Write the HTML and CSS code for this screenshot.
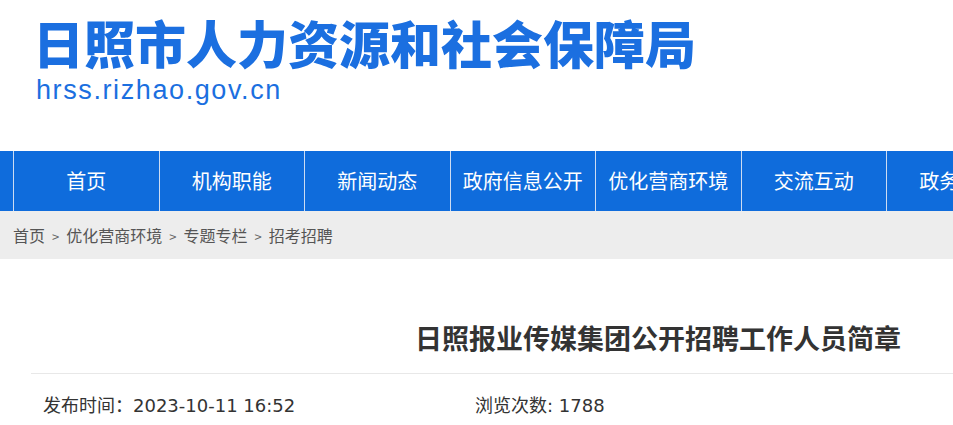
FILE: index.html
```html
<!DOCTYPE html>
<html lang="zh-CN">
<head>
  <meta charset="UTF-8">
  <meta name="viewport" content="width=device-width, initial-scale=1.0">
  <title>日照报业传媒集团公开招聘工作人员简章 | 日照市人力资源和社会保障局</title>
  <link rel="stylesheet" href="styles.css">
</head>
<body>
  <div class="page">
    <header class="site-head">
      <div class="site-name">日照市人力资源和社会保障局</div>
      <div class="site-url">hrss.rizhao.gov.cn</div>
    </header>

    <nav class="main-nav">
      <a href="#">首页</a>
      <a href="#">机构职能</a>
      <a href="#">新闻动态</a>
      <a href="#">政府信息公开</a>
      <a href="#">优化营商环境</a>
      <a href="#">交流互动</a>
      <a href="#">政务服务</a>
    </nav>

    <div class="crumbs">
      <a href="#">首页</a><span class="sep">&gt;</span><a href="#">优化营商环境</a><span class="sep">&gt;</span><a href="#">专题专栏</a><span class="sep">&gt;</span><a href="#">招考招聘</a>
    </div>

    <div class="article">
      <h1 class="article-title">日照报业传媒集团公开招聘工作人员简章</h1>
      <div class="article-meta">
        <span class="meta-date">发布时间：2023-10-11 16:52</span>
        <span class="meta-views">浏览次数: 1788</span>
      </div>
    </div>
  </div>
</body>
</html>
```

FILE: styles.css
```css
html, body {
  margin: 0;
  padding: 0;
  overflow: hidden;
}
body {
  font-family: "Noto Sans", "Noto Sans CJK SC", sans-serif;
  background: #fff;
  color: #333;
}
a {
  text-decoration: none;
  color: inherit;
}
.site-head {
  height: 151px;
  padding-left: 33px;
  box-sizing: border-box;
}
.site-name {
  height: 56px;
  padding-top: 14px;
  font-family: "Noto Sans CJK SC", sans-serif;
  font-size: 51px;
  font-weight: 900;
  line-height: 56px;
  color: #1b6fe0;
  white-space: nowrap;
}
.site-url {
  margin-top: 4px;
  padding-left: 3px;
  font-family: "Liberation Sans", Arial, sans-serif;
  font-size: 27px;
  letter-spacing: 1.6px;
  line-height: 32px;
  color: #1b6fe0;
}
.main-nav {
  display: flex;
  height: 60px;
  padding-left: 13px;
  background: #0f6cdc;
  white-space: nowrap;
}
.main-nav a {
  flex: 0 0 144.5px;
  border-left: 1px solid #cddcf2;
  text-align: center;
  line-height: 60px;
  font-family: "Noto Sans CJK SC", sans-serif;
  font-size: 20px;
  color: #fff;
}
.crumbs {
  height: 48px;
  padding-left: 13px;
  background: #ededed;
  font-family: "Noto Sans CJK SC", sans-serif;
  font-size: 16px;
  line-height: 48px;
  color: #555;
  white-space: nowrap;
}
.crumbs .sep {
  margin: 0 7px;
  font-size: 13px;
  color: #666;
}
.article {
  padding: 59px 0 0 31px;
}
.article-title {
  margin: 0;
  padding: 0 0 15px 384px;
  font-family: "Noto Sans CJK SC", sans-serif;
  font-size: 27px;
  font-weight: 700;
  line-height: 40px;
  color: #333;
  white-space: nowrap;
  border-bottom: 1px solid #e8e8e8;
}
.article-meta {
  display: flex;
  padding: 18px 0 0 12px;
  font-family: "DejaVu Sans", "Noto Sans CJK SC", sans-serif;
  font-size: 18px;
  line-height: 28px;
  color: #333;
  white-space: nowrap;
}
.meta-date {
  width: 432px;
}
```
